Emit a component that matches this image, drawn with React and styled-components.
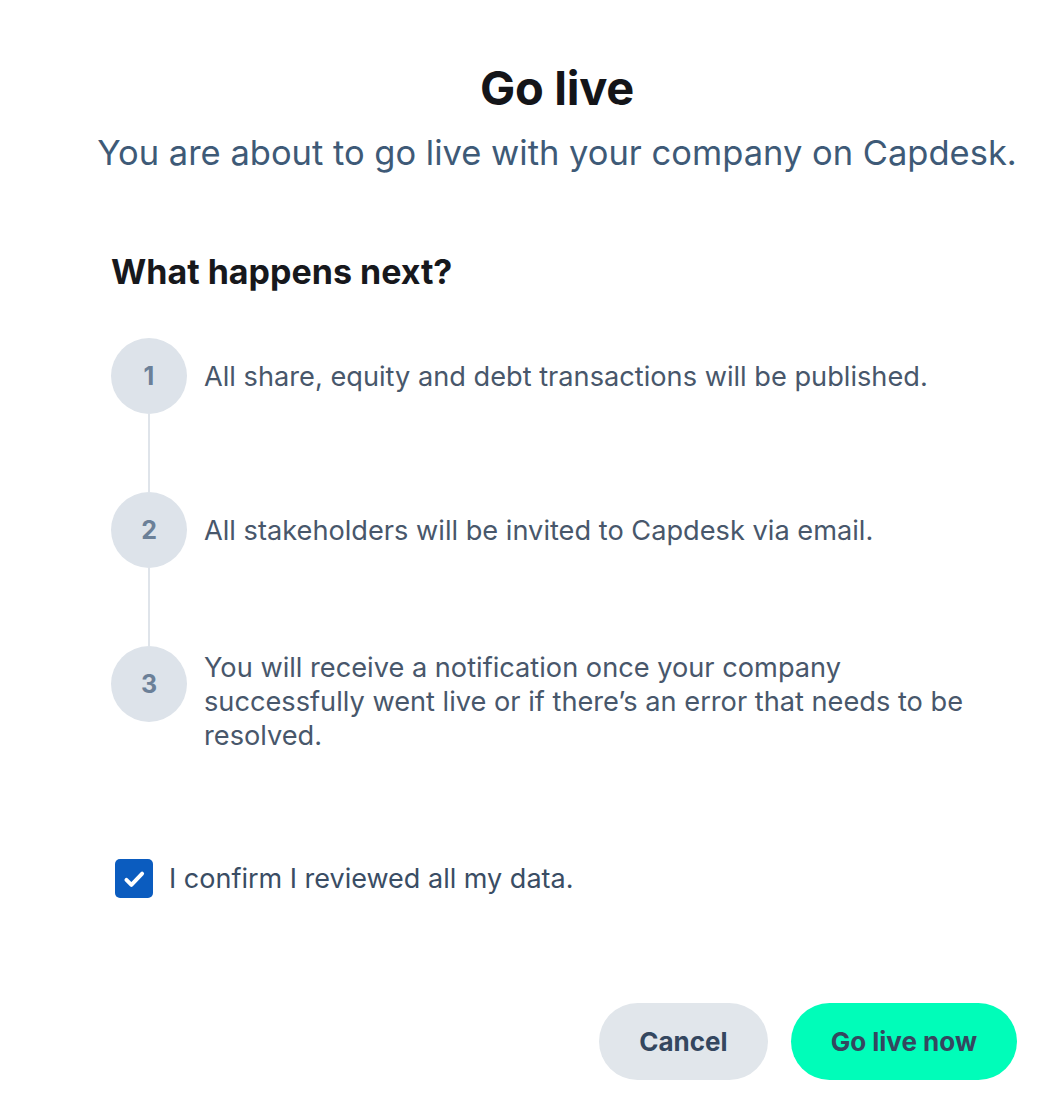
import React from "react";
import styled, { createGlobalStyle } from "styled-components";

const Global = createGlobalStyle`
  html, body { margin: 0; padding: 0; background: #ffffff; }
  body { font-family: Inter, "Noto Sans", "Liberation Sans", sans-serif; -webkit-font-smoothing: antialiased; }
  * { box-sizing: border-box; }
`;

const Page = styled.div`
  width: 1058px;
  height: 1104px;
  padding: 60px 41px 0 97px;
  overflow: hidden;
`;

const Header = styled.header`
  display: flex;
  flex-direction: column;
  align-items: center;
  width: 920px;
`;

const Title = styled.h1`
  margin: 0;
  font-size: 47px;
  line-height: 56px;
  font-weight: 700;
  color: #141519;
  letter-spacing: -0.3px;
`;

const Subtitle = styled.p`
  margin: 17px 0 0;
  font-size: 34.5px;
  line-height: 40px;
  font-weight: 400;
  color: #3e5a77;
  white-space: nowrap;
`;

const Body = styled.section`
  width: 920px;
  padding-left: 14px;
`;

const Heading = styled.h2`
  margin: 79px 0 0;
  font-size: 34px;
  line-height: 40px;
  font-weight: 700;
  color: #17181c;
`;

const Steps = styled.ol`
  list-style: none;
  margin: 46px 0 0;
  padding: 0;
  display: flex;
  flex-direction: column;
`;

const Step = styled.li`
  display: flex;
  align-items: flex-start;
  gap: 17px;
`;

const Rail = styled.div`
  display: flex;
  flex-direction: column;
  align-items: center;
  width: 76px;
  flex: none;
`;

const Circle = styled.div`
  width: 76px;
  height: 76px;
  border-radius: 50%;
  background: #dde3ea;
  color: #6b8098;
  font-size: 25px;
  font-weight: 700;
  display: flex;
  align-items: center;
  justify-content: center;
`;

const Connector = styled.div`
  width: 2px;
  height: 78px;
  background: #dfe4ea;
`;

const StepText = styled.p`
  margin: 0;
  padding-top: ${(p) => p.$offset}px;
  font-size: 27.2px;
  line-height: 34px;
  font-weight: 400;
  color: #48576b;
  max-width: 775px;
`;

const Confirm = styled.label`
  display: flex;
  align-items: center;
  gap: 16px;
  margin: 106px 0 0 4px;
  cursor: pointer;
`;

const Box = styled.span`
  width: 38px;
  height: 39px;
  border-radius: 5px;
  background: #0b5cbf;
  display: flex;
  align-items: center;
  justify-content: center;
  flex: none;
`;

const ConfirmText = styled.span`
  font-size: 27px;
  line-height: 34px;
  color: #3a4d64;
`;

const Actions = styled.div`
  display: flex;
  justify-content: flex-end;
  gap: 23px;
  margin-top: 105px;
`;

const Button = styled.button`
  height: 77px;
  padding: 0 ${(p) => (p.$primary ? 40 : 40)}px;
  border: none;
  border-radius: 39px;
  font-family: inherit;
  font-size: 26px;
  font-weight: 700;
  color: #34475f;
  background: ${(p) => (p.$primary ? "#00fdb9" : "#e1e6eb")};
  cursor: pointer;
`;

const steps = [
  { n: 1, text: "All share, equity and debt transactions will be published.", offset: 22 },
  { n: 2, text: "All stakeholders will be invited to Capdesk via email.", offset: 22 },
  {
    n: 3,
    text: "You will receive a notification once your company successfully went live or if there’s an error that needs to be resolved.",
    offset: 5,
  },
];

export default function App() {
  return (
    <>
      <Global />
      <Page>
        <Header>
          <Title>Go live</Title>
          <Subtitle>You are about to go live with your company on Capdesk.</Subtitle>
        </Header>
        <Body>
          <Heading>What happens next?</Heading>
          <Steps>
            {steps.map((s, i) => (
              <Step key={s.n}>
                <Rail>
                  <Circle>{s.n}</Circle>
                  {i < steps.length - 1 && <Connector />}
                </Rail>
                <StepText $offset={s.offset}>{s.text}</StepText>
              </Step>
            ))}
          </Steps>
          <Confirm>
            <Box>
              <svg width="26" height="26" viewBox="0 0 24 24" fill="none" stroke="#fff" strokeWidth="3.6" strokeLinecap="round" strokeLinejoin="round">
                <path d="M5 12.8l4.6 4.6L19.5 7" />
              </svg>
            </Box>
            <ConfirmText>I confirm I reviewed all my data.</ConfirmText>
          </Confirm>
          <Actions>
            <Button>Cancel</Button>
            <Button $primary>Go live now</Button>
          </Actions>
        </Body>
      </Page>
    </>
  );
}
